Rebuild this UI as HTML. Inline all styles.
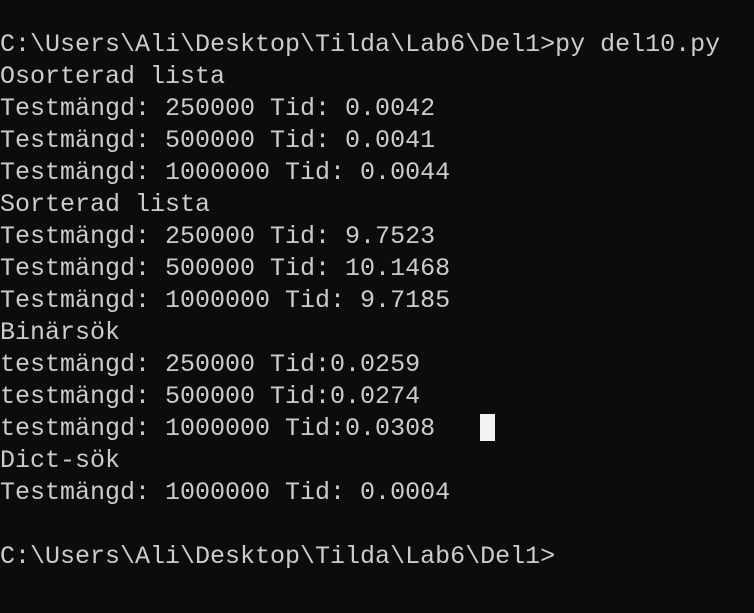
<!DOCTYPE html>
<html><head><meta charset="utf-8"><style>
html,body{margin:0;padding:0;background:#0c0c0c;width:754px;height:613px;overflow:hidden}
pre{position:absolute;left:0;top:29px;margin:0;font-family:"Liberation Mono",monospace;font-size:25px;line-height:32px;color:#cccccc;letter-spacing:0}
.cur{position:absolute;left:480px;top:414px;width:15px;height:27px;background:#f2f2f2}
</style></head><body>
<pre>C:\Users\Ali\Desktop\Tilda\Lab6\Del1>py del10.py
Osorterad lista
Testmängd: 250000 Tid: 0.0042
Testmängd: 500000 Tid: 0.0041
Testmängd: 1000000 Tid: 0.0044
Sorterad lista
Testmängd: 250000 Tid: 9.7523
Testmängd: 500000 Tid: 10.1468
Testmängd: 1000000 Tid: 9.7185
Binärsök
testmängd: 250000 Tid:0.0259
testmängd: 500000 Tid:0.0274
testmängd: 1000000 Tid:0.0308
Dict-sök
Testmängd: 1000000 Tid: 0.0004

C:\Users\Ali\Desktop\Tilda\Lab6\Del1></pre>
<div class="cur"></div>
</body></html>
